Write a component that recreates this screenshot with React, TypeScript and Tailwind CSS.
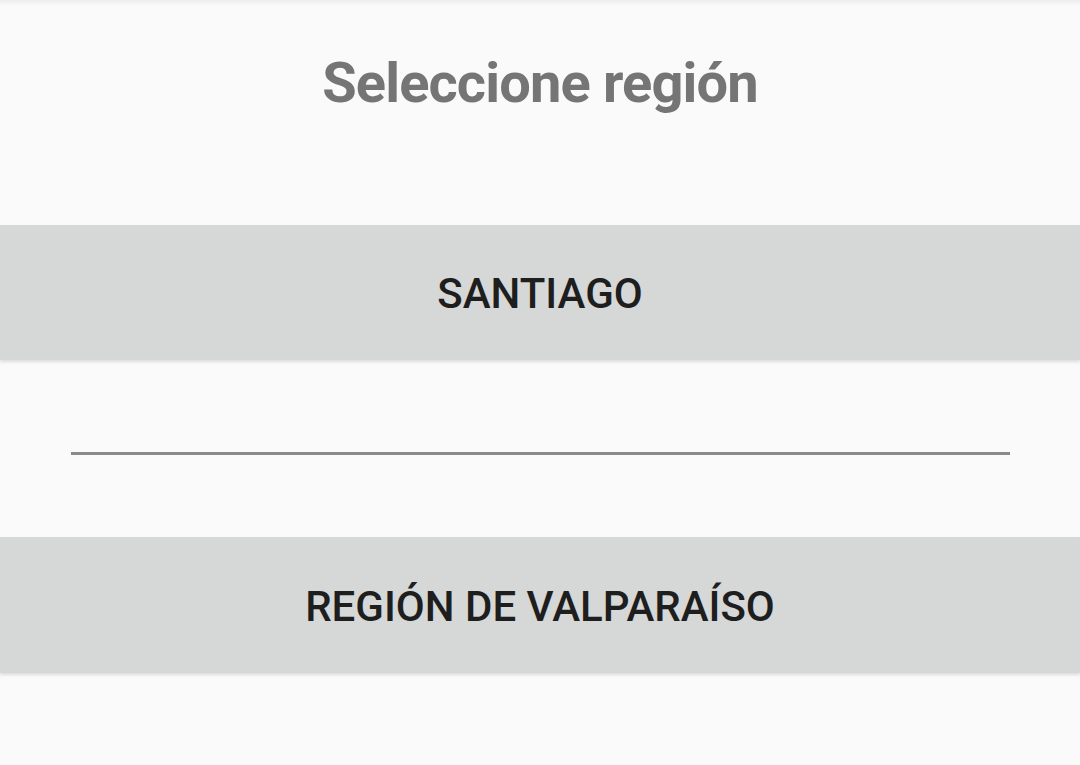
import React from "react";

export default function App() {
  return (
    <div className="w-[1080px] h-[765px] bg-[#fafafa] overflow-hidden relative" style={{ fontFamily: "Roboto, 'Noto Sans', sans-serif" }}>
      <div className="absolute top-0 left-0 right-0 h-[6px] bg-gradient-to-b from-[#ececec] to-[#fafafa]" />
      <div className="h-[225px] flex justify-center pt-[50px]">
        <h1 className="text-[56px] leading-[66px] font-bold text-[#757575] tracking-[-0.85px]">Seleccione región</h1>
      </div>
      <div className="h-[135px] bg-[#d6d7d7] flex items-center justify-center shadow-[0_2px_3px_rgba(0,0,0,0.12)]">
        <span className="text-[42px] leading-[50px] pt-[3px] font-medium text-[#1e1e1e]">SANTIAGO</span>
      </div>
      <div className="h-[177px] px-[71px] pt-[92px]">
        <div className="h-[3px] bg-[#8a8a8a] w-[939px]" />
      </div>
      <div className="h-[136px] bg-[#d6d7d7] flex items-center justify-center shadow-[0_2px_3px_rgba(0,0,0,0.12)]">
        <span className="text-[42px] leading-[50px] pt-[3px] font-medium text-[#1e1e1e]">REGIÓN DE VALPARAÍSO</span>
      </div>
    </div>
  );
}
